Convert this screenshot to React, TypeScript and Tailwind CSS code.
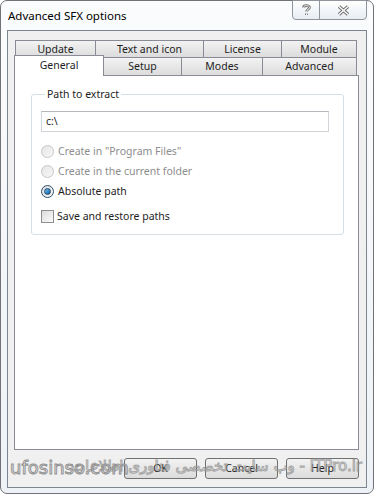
import React from 'react';

const row1 = [
  { label: 'Update', w: 'w-[81px]' },
  { label: 'Text and icon', w: 'w-[109px]' },
  { label: 'License', w: 'w-[79px]' },
  { label: 'Module', w: 'w-[76px]' },
];

const row2 = [
  { label: 'Setup', w: 'w-[79px]' },
  { label: 'Modes', w: 'w-[82px]' },
  { label: 'Advanced', w: 'w-[95px]' },
];

const tabClass =
  'flex items-center justify-center border border-[#898c95] bg-gradient-to-b from-[#f3f3f3] to-[#dcdcdc] text-[#1e1e1e]';

const Radio = ({ checked, disabled, label }: { checked?: boolean; disabled?: boolean; label: string }) => (
  <div className="flex h-[20px] items-center gap-[4px]">
    <span
      className={`flex h-[13px] w-[13px] items-center justify-center rounded-full border ${
        disabled
          ? 'border-[#c6c6c6] bg-gradient-to-br from-[#e6e6e6] to-[#f7f7f7]'
          : 'border-[#2c4e6e] bg-gradient-to-br from-[#dcdcdc] to-[#fafafa]'
      }`}
    >
      {checked && (
        <span className="h-[7px] w-[7px] rounded-full border border-[#1b4d74] bg-gradient-to-br from-[#6fc3f3] to-[#0d5a93]" />
      )}
    </span>
    <span className={disabled ? 'text-[#8d8d8d]' : 'text-[#1e1e1e]'}>{label}</span>
  </div>
);

const DialogButton = ({ label }: { label: string }) => (
  <button className="h-[21px] w-[73px] rounded-[3px] border border-[#707070] bg-gradient-to-b from-[#f2f2f2] to-[#dcdcdc] text-[#1e1e1e]">
    {label}
  </button>
);

export default function App() {
  return (
    <div className="relative h-[494px] w-[374px] overflow-hidden bg-white font-['Noto_Sans','DejaVu_Sans',sans-serif] text-[10.5px] leading-none">
      <div className="flex h-full flex-col rounded-[7px] border border-[#6f7378] bg-gradient-to-b from-[#fbfcfd] to-[#eef2f6] px-[6px] pb-[5px]">
        {/* title bar */}
        <div className="flex h-[29px] shrink-0 justify-between">
          <span className="mt-[9px] pl-[1px] text-[11.5px] text-black">Advanced SFX options</span>
          <div className="-mt-px flex h-[20px]">
            <div className="flex w-[28px] items-center justify-center rounded-bl-[4px] border border-[#8f959c] bg-gradient-to-b from-white to-[#e7edf3]">
              <svg width="9" height="12" viewBox="0 0 9 12">
                <path d="M1.5 3.5 C1.5 1 7.5 1 7.5 3.5 C7.5 5.5 4.5 5.5 4.5 7.5 M4.5 9.5 V11" fill="none" stroke="#6a6a6a" strokeWidth="2.6" />
                <path d="M1.5 3.5 C1.5 1 7.5 1 7.5 3.5 C7.5 5.5 4.5 5.5 4.5 7.5 M4.5 9.5 V11" fill="none" stroke="#ffffff" strokeWidth="1" />
              </svg>
            </div>
            <div className="-ml-px flex w-[48px] items-center justify-center rounded-br-[4px] border border-[#8f959c] bg-gradient-to-b from-white to-[#e7edf3]">
              <svg width="13" height="11" viewBox="0 0 13 11">
                <path d="M2 1.5 L11 9.5 M11 1.5 L2 9.5" fill="none" stroke="#6a6a6a" strokeWidth="3.2" />
                <path d="M2 1.5 L11 9.5 M11 1.5 L2 9.5" fill="none" stroke="#ffffff" strokeWidth="1.4" />
              </svg>
            </div>
          </div>
        </div>

        {/* client area */}
        <div className="flex flex-1 flex-col border border-[#7c8590] bg-[#f0f0f0] pl-[6px] pr-[7px] pt-[9px]">
          <div className="ml-px flex h-[18px]">
            {row1.map((t, i) => (
              <div key={t.label} className={`${tabClass} ${t.w} ${i > 0 ? '-ml-px' : ''}`}>
                {t.label}
              </div>
            ))}
          </div>
          <div className="relative z-10 -mt-px ml-px flex h-[18px] items-end">
            <div className="relative z-10 -mb-px -ml-px flex h-[21px] w-[90px] items-start justify-center border border-b-0 border-[#898c95] bg-white pt-[4px] text-[#1e1e1e]">
              General
            </div>
            {row2.map(t => (
              <div key={t.label} className={`${tabClass} ${t.w} -ml-px h-[18px] border-b-0`}>
                {t.label}
              </div>
            ))}
          </div>

          {/* tab page */}
          <div className="flex flex-1 flex-col border border-[#898c95] bg-white pl-[16px] pr-[14px]">
            <fieldset className="mt-[10px] rounded-[3px] border border-[#d5dfe5] pb-[8px] pl-[9px] pr-[14px]">
              <legend className="ml-[4px] px-[2px] leading-[16px] text-[#1e1e1e]">Path to extract</legend>
              <div className="mt-[9px] flex h-[21px] items-center border border-[#d0d3d7] border-t-[#b5b8bd] bg-white pl-[4px] text-[#1e1e1e]">
                c:\
              </div>
              <div className="mt-[9px]">
                <Radio disabled label={'Create in "Program Files"'} />
                <Radio disabled label="Create in the current folder" />
                <Radio checked label="Absolute path" />
              </div>
              <div className="mt-[5px] flex h-[20px] items-center gap-[3px]">
                <span className="h-[13px] w-[13px] border border-[#8e8f8f] bg-gradient-to-br from-[#dcdcdc] to-[#fbfbfb]" />
                <span className="text-[#1e1e1e]">Save and restore paths</span>
              </div>
            </fieldset>
          </div>

          {/* dialog buttons */}
          <div className="mb-[8px] mt-[8px] flex justify-end gap-[8px]">
            <DialogButton label="OK" />
            <DialogButton label="Cancel" />
            <DialogButton label="Help" />
          </div>
        </div>
      </div>

      {/* watermark */}
      <span className="absolute left-[10px] top-[459px] font-['DejaVu_Sans',sans-serif] text-[18px] text-white opacity-80 [-webkit-text-stroke:1px_#7c7c7c]">
        ufosinso.com
      </span>
      <span
        dir="rtl"
        className="absolute right-[12px] top-[459px] whitespace-nowrap font-['DejaVu_Sans',sans-serif] text-[15px] text-white opacity-70 [-webkit-text-stroke:1px_#8a8a8a]"
      >
        ITPro.ir - وب سایت تخصصی فناوری اطلاعات
      </span>
    </div>
  );
}
